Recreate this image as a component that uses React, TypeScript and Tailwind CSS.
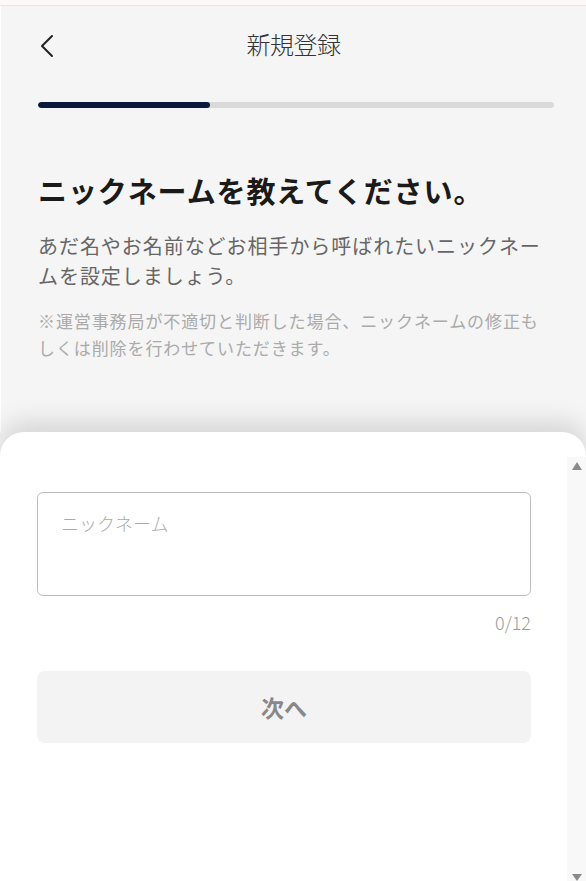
import React from "react";

export default function App() {
  return (
    <div
      className="w-[586px] h-[881px] overflow-hidden flex flex-col bg-[#f5f5f5]"
      style={{ fontFamily: '"Noto Sans CJK JP", "Noto Sans", sans-serif' }}
    >
      <div className="h-[6px] shrink-0 bg-[#fff8f8] border-b border-[#f8dede]" />
      <div className="flex-1 flex flex-col border-l border-white">
        <div className="relative h-[80px] flex items-center justify-center">
          <button className="absolute left-[37px] top-[26px] w-[18px] h-[28px] flex items-center justify-center text-[#222]">
            <svg width="14" height="24" viewBox="0 0 14 24" fill="none">
              <path d="M12 2 L2 12 L12 22" stroke="#222" strokeWidth="2" strokeLinecap="round" strokeLinejoin="round" />
            </svg>
          </button>
          <h1 className="text-[24px] font-light text-[#333] leading-none mt-[-4px] tracking-[-0.5px]">新規登録</h1>
        </div>
        <div className="pt-[16px] pl-[37px] pr-[32px]">
          <div className="h-[6px] rounded-full bg-[#dadada] overflow-hidden">
            <div className="h-full w-[172px] rounded-full bg-[#0a1a3c]" />
          </div>
        </div>
        <div className="pl-[37px] pr-[30px] pt-[64px]">
          <h2 className="text-[29px] font-bold text-[#1a1a1a] leading-[36px] tracking-[0.9px] whitespace-nowrap">
            ニックネームを教えてください。
          </h2>
          <p className="mt-[23px] text-[20px] text-[#666] leading-[30px] tracking-[0.95px]">
            あだ名やお名前などお相手から呼ばれたいニックネームを設定しましょう。
          </p>
          <p className="mt-[16px] text-[17px] text-[#aaa] leading-[27px] tracking-[0.9px]">
            ※運営事務局が不適切と判断した場合、ニックネームの修正もしくは削除を行わせていただきます。
          </p>
        </div>
      </div>
      <div className="h-[449px] shrink-0 bg-white rounded-t-[24px] shadow-[0_-10px_24px_rgba(0,0,0,0.13)] flex relative">
        <div className="flex-1 pl-[37px] pr-[36px] pt-[60px]">
          <div className="h-[104px] border border-[#bdbdbd] rounded-[6px] px-[23px] pt-[18px]">
            <span className="text-[18px] text-[#aaa] leading-[24px] font-light">ニックネーム</span>
          </div>
          <div className="mt-[14px] text-right text-[18px] text-[#9a9a9a] leading-[24px] font-light">0/12</div>
          <button className="mt-[37px] w-full h-[72px] rounded-[8px] bg-[#f3f3f3] text-[23px] font-bold text-[#888] flex items-center justify-center">
            次へ
          </button>
        </div>
        <div className="w-[19px] mt-[25px] bg-[#f8f8f8] flex flex-col items-center justify-between">
          <svg width="12" height="10" viewBox="0 0 12 10" className="mt-[4px]">
            <path d="M6 1 L11 9 L1 9 Z" fill="#8a8a8a" />
          </svg>
          <svg width="12" height="8" viewBox="0 0 12 8">
            <path d="M1 1 L11 1 L6 8 Z" fill="#8a8a8a" />
          </svg>
        </div>
      </div>
    </div>
  );
}
